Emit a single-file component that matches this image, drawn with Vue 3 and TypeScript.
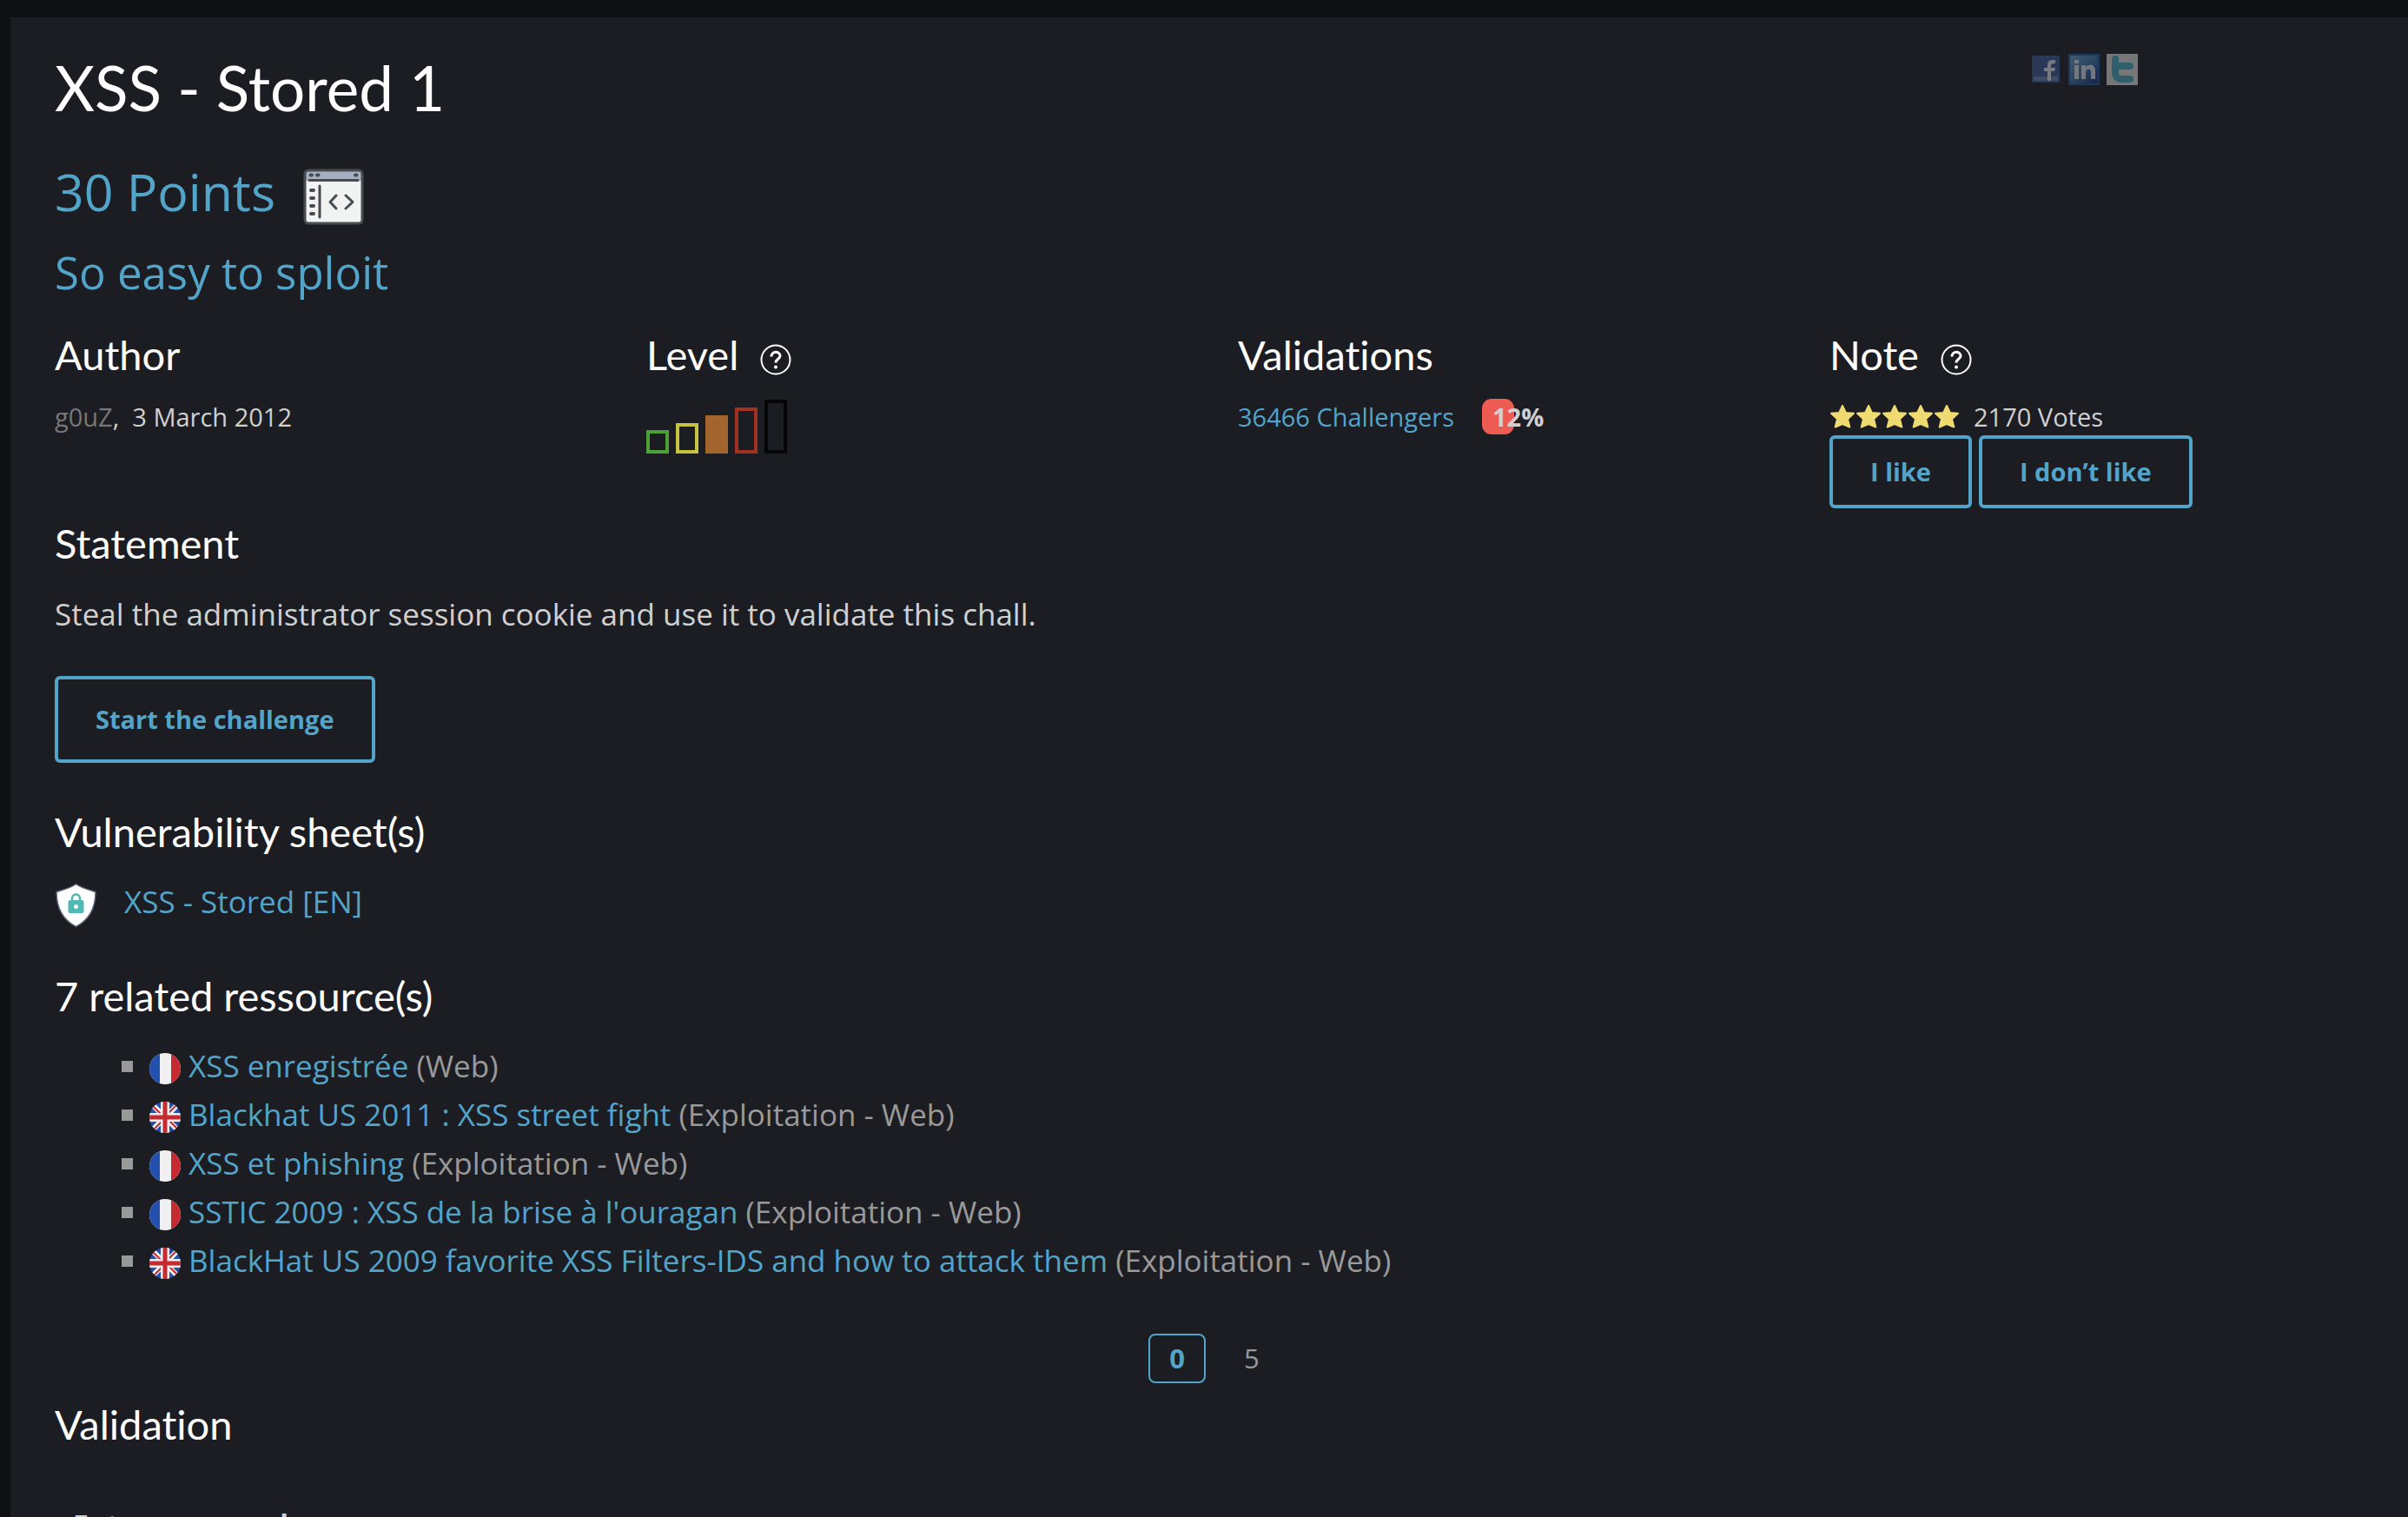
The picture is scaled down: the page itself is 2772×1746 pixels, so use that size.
<script setup lang="ts">
interface Resource {
  lang: 'fr' | 'en'
  title: string
  category: string
}

interface LevelBar {
  color: string
  height: number
  filled: boolean
}

const levels: LevelBar[] = [
  { color: '#4d9f37', height: 27, filled: false },
  { color: '#c6c340', height: 35, filled: false },
  { color: '#a1652d', height: 44, filled: true },
  { color: '#a13222', height: 53, filled: false },
  { color: '#060607', height: 62, filled: false },
]

const resources: Resource[] = [
  { lang: 'fr', title: 'XSS enregistrée', category: '(Web)' },
  { lang: 'en', title: 'Blackhat US 2011 : XSS street fight', category: '(Exploitation - Web)' },
  { lang: 'fr', title: 'XSS et phishing', category: '(Exploitation - Web)' },
  { lang: 'fr', title: "SSTIC 2009 : XSS de la brise à l'ouragan", category: '(Exploitation - Web)' },
  { lang: 'en', title: 'BlackHat US 2009 favorite XSS Filters-IDS and how to attack them', category: '(Exploitation - Web)' },
]
</script>

<template>
  <main class="panel">
    <header class="title-row">
      <h1>XSS - Stored 1</h1>
      <nav class="social" aria-label="Share">
        <a href="#" aria-label="Facebook">
          <svg viewBox="0 0 36 36">
            <rect x="2" y="2" width="32" height="31" fill="#3b5998" />
            <rect x="4" y="26" width="28" height="5" fill="#6d84b4" />
            <path d="M20 31V20h-4v-4h4v-3c0-4 2-6 6-6h3v4h-2c-2 0-3 1-3 2v3h5l-1 4h-4v11z" fill="#e8ebf2" />
          </svg>
        </a>
        <a href="#" aria-label="LinkedIn">
          <svg viewBox="0 0 36 36">
            <defs>
              <linearGradient id="li" x1="0" y1="0" x2="1" y2="1">
                <stop offset="0" stop-color="#6fa9cc" />
                <stop offset="0.5" stop-color="#3a78b0" />
                <stop offset="1" stop-color="#142c86" />
              </linearGradient>
            </defs>
            <rect width="36" height="36" fill="#1d5b98" />
            <rect x="2" y="2" width="32" height="32" rx="2" fill="url(#li)" />
            <path d="M7 13h5v16H7zM7 7h5v4H7zM15 13h5v2c3-3 11-4 11 5v9h-5v-8c0-5-6-4-6 0v8h-5z" fill="#dde6f0" />
          </svg>
        </a>
        <a href="#" aria-label="Twitter">
          <svg viewBox="0 0 36 36">
            <rect width="36" height="36" fill="#e4e4e4" />
            <path d="M10 6v15c0 6 3 8 8 8h9M10 14h17" fill="none" stroke="#48b0c2" stroke-width="8" stroke-linecap="round" stroke-linejoin="round" />
          </svg>
        </a>
      </nav>
    </header>

    <div class="points">
      <h2>30 Points</h2>
      <svg class="code-icon" viewBox="0 0 70 65" role="img" aria-label="Web client">
        <rect x="2" y="2" width="66" height="61" rx="4" fill="#f1f3f2" />
        <path d="M3 14V5a2 2 0 0 1 2-2h60a2 2 0 0 1 2 2v9z" fill="#a7b0c3" />
        <rect x="2" y="2" width="66" height="61" rx="4" fill="none" stroke="#464c50" stroke-width="3" />
        <path d="M7 13.500h56M19 20v36" fill="none" stroke="#464c50" stroke-width="3" stroke-linecap="round" />
        <path d="M8.500 7.500h1.500M16 7.500h1.500M60 7.500h1.500M9 25h3M9 34h3M9 43h3M9 52h3" stroke="#464c50" stroke-width="4" stroke-linecap="round" />
        <path d="M38 31l-7 7.500 7 7.500M49 31l8 7.500-8 7.500" fill="none" stroke="#464c50" stroke-width="3" stroke-linecap="round" stroke-linejoin="round" />
      </svg>
    </div>
    <p class="subtitle">So easy to sploit</p>

    <section class="facts">
      <div class="fact">
        <h3>Author</h3>
        <p class="meta"><a href="#" class="author">g0uZ</a>,&nbsp; 3 March 2012</p>
      </div>
      <div class="fact">
        <h3>
          Level
          <svg class="help" viewBox="0 0 36 36" role="img" aria-label="Help">
            <circle cx="18" cy="18" r="16.500" />
            <path d="M13 14.500c0-7 10-6.500 10-1 0 4-5 3.500-5 8" />
            <circle class="dot" cx="18" cy="26.500" r="2" />
          </svg>
        </h3>
        <div class="levels" role="img" aria-label="Medium">
          <span
            v-for="bar in levels"
            :key="bar.color"
            class="bar"
            :style="{ height: bar.height + 'px', borderColor: bar.color, background: bar.filled ? bar.color : 'none' }"
          ></span>
        </div>
      </div>
      <div class="fact">
        <h3>Validations</h3>
        <p class="meta validations">
          <a href="#">36466 Challengers</a>
          <span class="gauge">12%</span>
        </p>
      </div>
      <div class="fact">
        <h3>
          Note
          <svg class="help" viewBox="0 0 36 36" role="img" aria-label="Help">
            <circle cx="18" cy="18" r="16.500" />
            <path d="M13 14.500c0-7 10-6.500 10-1 0 4-5 3.500-5 8" />
            <circle class="dot" cx="18" cy="26.500" r="2" />
          </svg>
        </h3>
        <p class="meta votes">
          <span class="stars" role="img" aria-label="5 stars">
            <svg v-for="n in 5" :key="n" viewBox="0 0 30 30">
              <path d="M15 3l3.800 8 9.200.8-7 6.500 2.300 9.200L15 24l-8.300 3.500L9 18.300 2 11.800l9.200-.8z" />
            </svg>
          </span>
          2170 Votes
        </p>
        <div class="vote-buttons">
          <button type="button" class="button">I like</button>
          <button type="button" class="button">I don’t like</button>
        </div>
      </div>
    </section>

    <section class="statement">
      <h3>Statement</h3>
      <p>Steal the administrator session cookie and use it to validate this chall.</p>
      <button type="button" class="button large">Start the challenge</button>
    </section>

    <section class="sheets">
      <h3>Vulnerability sheet(s)</h3>
      <p class="sheet">
        <svg class="shield" viewBox="0 0 48 52" aria-hidden="true">
          <path d="M24 1.500C18 6 10 8 1.500 10.500c0 17 7 32 22.500 40 15.500-8 22.500-23 22.500-40C38 8 30 6 24 1.500z" fill="#fff" stroke="#5c6479" stroke-width="1.500" />
          <path d="M19.500 21v-3c0-6 9-6 9 0v3" fill="none" stroke="#52b8b4" stroke-width="2.500" />
          <rect x="15" y="20" width="18" height="15" rx="2" fill="#52b8b4" />
          <circle cx="24" cy="27.500" r="2.500" fill="#fff" />
        </svg>
        <a href="#">XSS - Stored [EN]</a>
      </p>
    </section>

    <section class="related">
      <h3>7 related ressource(s)</h3>
      <ul>
        <li v-for="item in resources" :key="item.title">
          <svg v-if="item.lang === 'fr'" class="flag" viewBox="0 0 36 36" role="img" aria-label="fr">
            <path fill="#f0f0f0" d="M0 0h36v36H0z" />
            <path fill="#2350ae" d="M0 0h12v36H0z" />
            <path fill="#c62a31" d="M25 0h11v36H25z" />
          </svg>
          <svg v-else class="flag" viewBox="0 0 36 36" role="img" aria-label="en">
            <path fill="#2350ae" d="M0 0h36v36H0z" />
            <path d="M2 2l32 32M34 2L2 34" stroke="#f0f0f0" stroke-width="6" />
            <path d="M2 3l11 11M33 2L22 13M3 34l11-11M34 33L23 22" stroke="#c62a31" stroke-width="2" />
            <path d="M18 0v36M0 18h36" stroke="#f0f0f0" stroke-width="10" />
            <path d="M18 0v36M0 18h36" stroke="#c62a31" stroke-width="5" />
          </svg>
          <span><a href="#">{{ item.title }}</a> {{ item.category }}</span>
        </li>
      </ul>
      <nav class="pages" aria-label="Pages">
        <a href="#" class="page current" aria-current="page">0</a>
        <a href="#" class="page">5</a>
      </nav>
    </section>

    <section class="validation">
      <h3>Validation</h3>
      <form @submit.prevent>
        <label for="flag">Enter password</label>
        <input id="flag" type="password" />
      </form>
    </section>
  </main>
</template>

<style>
body {
  margin: 0;
  background: #0f1014;
}
</style>

<style scoped>
.panel {
  box-sizing: border-box;
  margin: 20px 0 0 12px;
  padding: 29px 0 0 36px;
  min-height: calc(100vh - 20px);
  background: #1c1d22;
  color: #d0d0d0;
  font: 35px/56px "Open Sans", sans-serif;
}

h1, h2, h3, p, ul {
  margin: 0;
  padding: 0;
  font-weight: 400;
}

a {
  color: #53a4c9;
  text-decoration: none;
}

h1, h3 {
  color: #fff;
  font-family: Lato, sans-serif;
  font-variant-ligatures: none;
}

h1 {
  flex: 1;
  padding-left: 15px;
  font-size: 71px;
  line-height: 104px;
}

h3 {
  display: flex;
  align-items: center;
  gap: 25px;
  font-size: 47px;
  line-height: 60px;
}

.title-row {
  display: flex;
}

.social {
  display: flex;
  gap: 8px;
  box-sizing: border-box;
  width: 16.6667%;
  padding: 13px 0 0 19px;
  opacity: 0.45;
}

.social a {
  height: 36px;
}

.social svg {
  display: block;
  width: 36px;
  height: 36px;
}

.points {
  display: flex;
  align-items: center;
  gap: 32px;
  margin-top: 27px;
  padding: 0 15px;
  color: #53a4c9;
}

h2 {
  font-size: 59px;
  line-height: 80px;
}

.code-icon {
  width: 70px;
  height: 65px;
  margin-top: 12px;
}

.subtitle {
  margin-top: 18px;
  padding: 0 15px;
  color: #53a4c9;
  font-size: 51px;
  line-height: 70px;
}

.facts {
  display: grid;
  grid-template-columns: repeat(4, 1fr);
  margin-top: 30px;
}

.fact {
  padding: 0 15px;
}

.help {
  width: 36px;
  height: 36px;
  margin-top: 12px;
  fill: none;
  stroke: #fff;
  stroke-width: 2;
}

.help path {
  stroke-width: 3;
}

.help .dot {
  fill: #fff;
  stroke: none;
}

.meta {
  margin-top: 21px;
  font-size: 29px;
  line-height: 42px;
}

.author {
  color: #777;
}

.levels {
  display: flex;
  align-items: flex-end;
  gap: 8px;
  margin-top: 22px;
}

.bar {
  box-sizing: border-box;
  width: 26px;
  border: 4px solid;
}

.validations {
  display: flex;
  gap: 32px;
}

.gauge {
  box-sizing: border-box;
  width: 37px;
  height: 41px;
  padding-left: 12px;
  border-radius: 11px;
  background: #ee5b53;
  font-weight: 700;
}

.votes {
  display: flex;
  gap: 16px;
}

.stars {
  display: flex;
  padding-top: 5px;
}

.stars svg {
  width: 30px;
  height: 30px;
  fill: #f0db72;
  stroke: #f0db72;
  stroke-width: 2;
  stroke-linejoin: round;
}

.vote-buttons {
  display: flex;
  gap: 8px;
}

.button {
  display: block;
  padding: 15px 43px;
  border: 4px solid #53a4c9;
  border-radius: 6px;
  background: none;
  color: #53a4c9;
  font: 700 29px/46px "Open Sans", sans-serif;
}

.button.large {
  margin-top: 43px;
  padding: 23px 43px;
}

.statement {
  margin-top: 10px;
  padding: 0 15px;
}

.statement p {
  margin-top: 24px;
}

.sheets {
  margin-top: 49px;
  padding: 0 15px;
}

.sheet {
  display: flex;
  align-items: center;
  gap: 31px;
  margin-top: 21px;
}

.shield {
  width: 49px;
  height: 52px;
  margin-top: 8px;
}

.related {
  margin-top: 48px;
  padding: 0 15px;
}

ul {
  margin-top: 23px;
  padding-left: 77px;
  list-style: none;
}

li {
  display: flex;
  align-items: center;
  color: #999;
}

li::before {
  content: "";
  width: 13px;
  height: 13px;
  margin-right: 19px;
  background: #999;
}

.flag {
  width: 36px;
  height: 36px;
  margin: 6px 9px 0 0;
  border-radius: 50%;
}

.pages {
  display: flex;
  justify-content: center;
  gap: 20px;
  margin-top: 56px;
  padding-right: 24px;
}

.page {
  padding: 4px 22px;
  border: 2px solid transparent;
  border-radius: 8px;
  color: #999;
  font-size: 31px;
  line-height: 45px;
}

.page.current {
  border-color: #53a4c9;
  color: #53a4c9;
  font-weight: 700;
}

.validation {
  margin-top: 17px;
  padding: 0 15px;
}

form {
  display: flex;
  flex-direction: column;
  align-items: flex-start;
  gap: 12px;
  margin-top: 63px;
  padding: 0 21px 40px;
}

label {
  font-size: 32px;
  font-weight: 700;
  line-height: 46px;
}

input {
  box-sizing: border-box;
  width: 50%;
  height: 80px;
  border: 2px solid #333;
  background: #0f1014;
  color: #d0d0d0;
}
</style>
